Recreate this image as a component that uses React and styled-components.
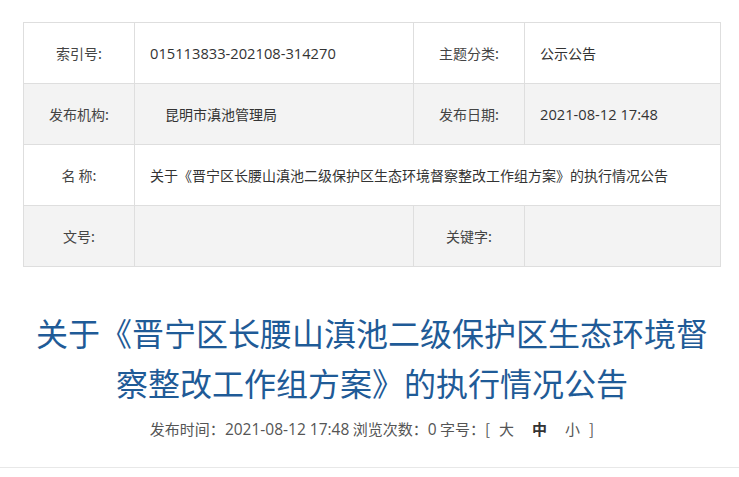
import React from "react";
import styled, { createGlobalStyle } from "styled-components";

const Global = createGlobalStyle`
  html, body { margin: 0; padding: 0; background: #fff; }
  body { font-family: "Noto Sans CJK SC", "Noto Sans", sans-serif; }
`;

const Page = styled.div`
  width: 739px;
  padding-top: 22px;
`;

const Content = styled.div`
  width: 698px;
  margin-left: 23px;
`;

const InfoTable = styled.div`
  display: grid;
  grid-template-columns: 111px 279px 111px 196px;
  grid-auto-rows: 61px;
  border-top: 1px solid #dedede;
  border-left: 1px solid #dedede;
`;

const Cell = styled.div`
  box-sizing: border-box;
  display: flex;
  align-items: center;
  justify-content: ${(p) => (p.$label ? "center" : "flex-start")};
  padding: ${(p) => (p.$label ? "0" : `0 0 0 ${p.$indent || 15}px`)};
  border-right: 1px solid #dedede;
  border-bottom: 1px solid #dedede;
  background: ${(p) => (p.$shade ? "#f3f3f3" : "#fff")};
  grid-column: ${(p) => p.$span || "auto"};
  font-size: 14px;
  color: ${(p) => (p.$label ? "#444" : "#333")};
  white-space: nowrap;
  overflow: hidden;
`;

const Num = styled.span`
  font-family: "Open Sans", "Noto Sans", sans-serif;
  font-size: ${(p) => p.$size || 14.7}px;
`;

const Title = styled.h1`
  margin: 40px 0 0;
  font-size: 32px;
  line-height: 50px;
  font-weight: 400;
  color: #1f5b97;
  text-align: center;
`;

const Meta = styled.div`
  margin-top: 10px;
  font-size: 15px;
  line-height: 24px;
  color: #555;
  text-align: center;
  white-space: nowrap;
`;

const SizeOpt = styled.span`
  margin: 0 ${(p) => p.$gap || 9}px;
  font-weight: ${(p) => (p.$active ? 700 : 400)};
  color: ${(p) => (p.$active ? "#333" : "#555")};
`;

const Divider = styled.div`
  margin-top: 26px;
  height: 1px;
  background: #e8e8e8;
`;

export default function App() {
  return (
    <Page>
      <Global />
      <Content>
        <InfoTable>
          <Cell $label>索引号:</Cell>
          <Cell><Num>015113833-202108-314270</Num></Cell>
          <Cell $label>主题分类:</Cell>
          <Cell>公示公告</Cell>

          <Cell $label $shade>发布机构:</Cell>
          <Cell $shade $indent={30}>昆明市滇池管理局</Cell>
          <Cell $label $shade>发布日期:</Cell>
          <Cell $shade><Num>2021-08-12 17:48</Num></Cell>

          <Cell $label>名 称:</Cell>
          <Cell $span="2 / 5">关于《晋宁区长腰山滇池二级保护区生态环境督察整改工作组方案》的执行情况公告</Cell>

          <Cell $label $shade>文号:</Cell>
          <Cell $shade></Cell>
          <Cell $label $shade>关键字:</Cell>
          <Cell $shade></Cell>
        </InfoTable>

        <Title>关于《晋宁区长腰山滇池二级保护区生态环境督察整改工作组方案》的执行情况公告</Title>

        <Meta>
          发布时间：<Num $size={15.5}>2021-08-12 17:48</Num> 浏览次数：<Num $size={15.5}>0</Num> 字号：[
          <SizeOpt>大</SizeOpt>
          <SizeOpt $active>中</SizeOpt>
          <SizeOpt>小</SizeOpt>]
        </Meta>
      </Content>
      <Divider />
    </Page>
  );
}
